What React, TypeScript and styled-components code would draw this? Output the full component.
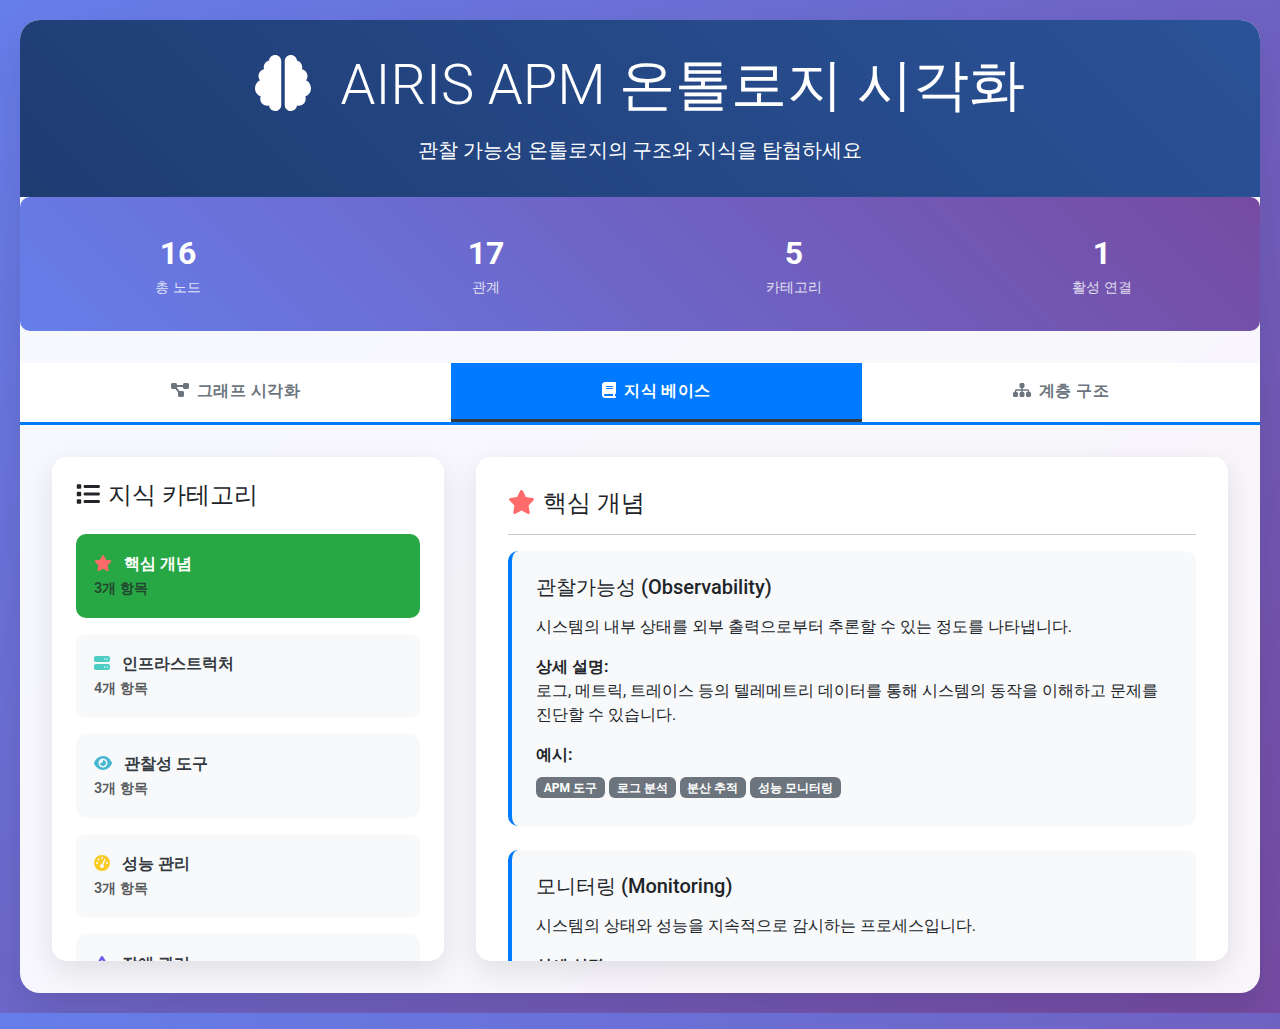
import React from "react";
import styled, { createGlobalStyle } from "styled-components";
import type { IconType } from "react-icons";
import {
  FaBrain, FaDiagramProject, FaBook, FaSitemap, FaList, FaStar,
  FaServer, FaEye, FaGaugeHigh, FaTriangleExclamation,
} from "react-icons/fa6";

const GlobalStyle = createGlobalStyle`
  *, *::before, *::after { box-sizing: border-box; }
  body {
    margin: 0;
    padding: 20px;
    font-family: "Segoe UI", Roboto, sans-serif;
    font-size: 16px;
    line-height: 1.5;
    color: #212529;
    background: linear-gradient(135deg, #667eea 0%, #764ba2 100%);
  }
  h1, h3, h4, h5, p { margin: 0; }
`;

const Shell = styled.div`
  height: 973px;
  border-radius: 20px;
  overflow: hidden;
  background: rgba(255, 255, 255, 0.95);
  box-shadow: 0 20px 40px rgba(0, 0, 0, 0.1);
`;

const Glyph = styled.span<{ $ratio: number; $color?: string; $gap?: string }>`
  display: inline-block;
  width: ${(p) => p.$ratio}em;
  height: 1em;
  line-height: 1;
  vertical-align: -0.125em;
  margin-right: ${(p) => p.$gap ?? "8px"};
  color: ${(p) => p.$color ?? "inherit"};
  svg { display: block; width: 100%; height: 100%; }
`;

const Header = styled.header`
  position: relative;
  padding: 32px;
  text-align: center;
  color: #fff;
  background: linear-gradient(45deg, #1e3c72, #2a5298);
`;

const Mesh = styled.svg`
  position: absolute;
  inset: 0;
  width: 100%;
  height: 100%;
`;

const Title = styled.h1`
  position: relative;
  margin-bottom: 16px;
  font-size: 56px;
  font-weight: 300;
  line-height: 1.2;
`;

const Lead = styled.p`
  position: relative;
  font-size: 20px;
  font-weight: 300;
`;

const Stats = styled.section`
  display: grid;
  grid-template-columns: repeat(4, 1fr);
  padding: 32px 4px;
  margin-bottom: 32px;
  border-radius: 10px;
  color: #fff;
  text-align: center;
  background: linear-gradient(45deg, #667eea, #764ba2);
`;

const StatNumber = styled.div`
  font-size: 32px;
  font-weight: 700;
`;

const StatLabel = styled.div`
  font-size: 14.4px;
  opacity: 0.8;
`;

const Tabs = styled.nav`
  display: flex;
  background: #fff;
  border-bottom: 3px solid #007bff;
`;

const Tab = styled.button<{ $active?: boolean }>`
  flex: 1 1 auto;
  padding: 16px;
  border: 0;
  border-bottom: 3px solid ${(p) => (p.$active ? "#343a40" : "transparent")};
  background: ${(p) => (p.$active ? "#007bff" : "transparent")};
  color: ${(p) => (p.$active ? "#fff" : "#6c757d")};
  font: inherit;
  font-weight: 600;
  letter-spacing: 0.5px;
`;

const Content = styled.main`
  display: grid;
  grid-template-columns: 392px 1fr;
  gap: 32px;
  padding: 32px;
`;

const Panel = styled.section<{ $pad: number }>`
  height: 504px;
  padding: ${(p) => p.$pad}px;
  overflow-y: auto;
  scrollbar-width: none;
  border-radius: 15px;
  background: #fff;
  box-shadow: 0 10px 30px rgba(0, 0, 0, 0.1);
`;

const PanelTitle = styled.h4<{ $mb: number }>`
  margin-bottom: ${(p) => p.$mb}px;
  font-size: 24px;
  font-weight: 500;
  line-height: 1.2;
`;

const Category = styled.div<{ $active?: boolean }>`
  padding: 16px;
  margin-bottom: 16px;
  border: 2px solid transparent;
  border-radius: 10px;
  font-weight: 600;
  color: ${(p) => (p.$active ? "#fff" : "#343a40")};
  background: ${(p) => (p.$active ? "#28a745" : "#f8f9fa")};
`;

const Count = styled.div`
  small {
    font-size: 14.4px;
    color: rgba(33, 37, 41, 0.75);
  }
`;

const Rule = styled.hr`
  margin: 0 0 16px;
  border: 0;
  border-top: 1px solid #c8c9ca;
`;

const Concept = styled.article`
  padding: 24px;
  margin-bottom: 24px;
  border-left: 4px solid #007bff;
  border-radius: 10px;
  background: #f8f9fa;
`;

const ConceptTitle = styled.h5`
  margin-bottom: 16px;
  font-size: 20px;
  font-weight: 500;
  line-height: 1.2;
`;

const Paragraph = styled.p`
  margin-bottom: 16px;
`;

const Strong = styled.strong`
  display: block;
  font-weight: 700;
`;

const Badges = styled.div`
  display: flex;
  gap: 4.1px;
  height: 35px;
  padding-top: 10px;
  align-items: flex-start;
`;

const Badge = styled.span`
  padding: 5px 7.8px 4px;
  border-radius: 6px;
  font-size: 12px;
  font-weight: 700;
  line-height: 1;
  color: #fff;
  background: #6c757d;
`;

function Icon({ as: Shape, ratio = 1, color, gap }: { as: IconType; ratio?: number; color?: string; gap?: string }) {
  return (
    <Glyph $ratio={ratio} $color={color} $gap={gap}>
      <Shape />
    </Glyph>
  );
}

const stats = [
  ["16", "총 노드"],
  ["17", "관계"],
  ["5", "카테고리"],
  ["1", "활성 연결"],
];

const tabs = [
  { label: "그래프 시각화", icon: FaDiagramProject, ratio: 1.125 },
  { label: "지식 베이스", icon: FaBook, ratio: 0.875 },
  { label: "계층 구조", icon: FaSitemap, ratio: 1.125 },
];

const categories = [
  { name: "핵심 개념", count: 3, icon: FaStar, ratio: 1.125, color: "#ff6b6b" },
  { name: "인프라스트럭처", count: 4, icon: FaServer, ratio: 1, color: "#4ecdc4" },
  { name: "관찰성 도구", count: 3, icon: FaEye, ratio: 1.125, color: "#45b7d1" },
  { name: "성능 관리", count: 3, icon: FaGaugeHigh, ratio: 1, color: "#f9ca24" },
  { name: "장애 관리", count: 3, icon: FaTriangleExclamation, ratio: 1, color: "#6c5ce7" },
];

const concepts = [
  {
    title: "관찰가능성 (Observability)",
    summary: "시스템의 내부 상태를 외부 출력으로부터 추론할 수 있는 정도를 나타냅니다.",
    detail: "로그, 메트릭, 트레이스 등의 텔레메트리 데이터를 통해 시스템의 동작을 이해하고 문제를 진단할 수 있습니다.",
    examples: ["APM 도구", "로그 분석", "분산 추적", "성능 모니터링"],
  },
  {
    title: "모니터링 (Monitoring)",
    summary: "시스템의 상태와 성능을 지속적으로 감시하는 프로세스입니다.",
    detail: "",
    examples: [],
  },
];

export default function App() {
  const [tab, setTab] = React.useState(1);
  const [category, setCategory] = React.useState(0);
  return (
    <>
      <GlobalStyle />
      <Shell>
        <Header>
          <Mesh aria-hidden="true">
            <defs>
              <pattern id="mesh" width="8" height="8" patternUnits="userSpaceOnUse">
                <path d="M8 0H0V8" fill="none" stroke="#fff" strokeWidth="1" strokeOpacity="0.02" />
              </pattern>
            </defs>
            <rect width="100%" height="100%" fill="url(#mesh)" />
          </Mesh>
          <Title>
            <Icon as={FaBrain} gap="16px" /> AIRIS APM 온톨로지 시각화
          </Title>
          <Lead>관찰 가능성 온톨로지의 구조와 지식을 탐험하세요</Lead>
        </Header>
        <Stats>
          {stats.map(([value, label]) => (
            <div key={label}>
              <StatNumber>{value}</StatNumber>
              <StatLabel>{label}</StatLabel>
            </div>
          ))}
        </Stats>
        <Tabs>
          {tabs.map((t, i) => (
            <Tab key={t.label} $active={i === tab} onClick={() => setTab(i)}>
              <Icon as={t.icon} ratio={t.ratio} />
              {t.label}
            </Tab>
          ))}
        </Tabs>
        <Content>
          <Panel $pad={24}>
            <PanelTitle $mb={24}>
              <Icon as={FaList} />
              지식 카테고리
            </PanelTitle>
            {categories.map((c, i) => (
              <Category key={c.name} $active={i === category} onClick={() => setCategory(i)}>
                <Icon as={c.icon} ratio={c.ratio} color={c.color} /> {c.name}
                <Count>
                  <small>{c.count}개 항목</small>
                </Count>
              </Category>
            ))}
          </Panel>
          <Panel $pad={32}>
            <PanelTitle $mb={16}>
              <Icon as={FaStar} ratio={1.125} color="#ff6b6b" />
              핵심 개념
            </PanelTitle>
            <Rule />
            {concepts.map((c) => (
              <Concept key={c.title}>
                <ConceptTitle>{c.title}</ConceptTitle>
                <Paragraph>{c.summary}</Paragraph>
                <Paragraph>
                  <Strong>상세 설명:</Strong>
                  {c.detail}
                </Paragraph>
                <Strong>예시:</Strong>
                <Badges>
                  {c.examples.map((e) => (
                    <Badge key={e}>{e}</Badge>
                  ))}
                </Badges>
              </Concept>
            ))}
          </Panel>
        </Content>
      </Shell>
    </>
  );
}
